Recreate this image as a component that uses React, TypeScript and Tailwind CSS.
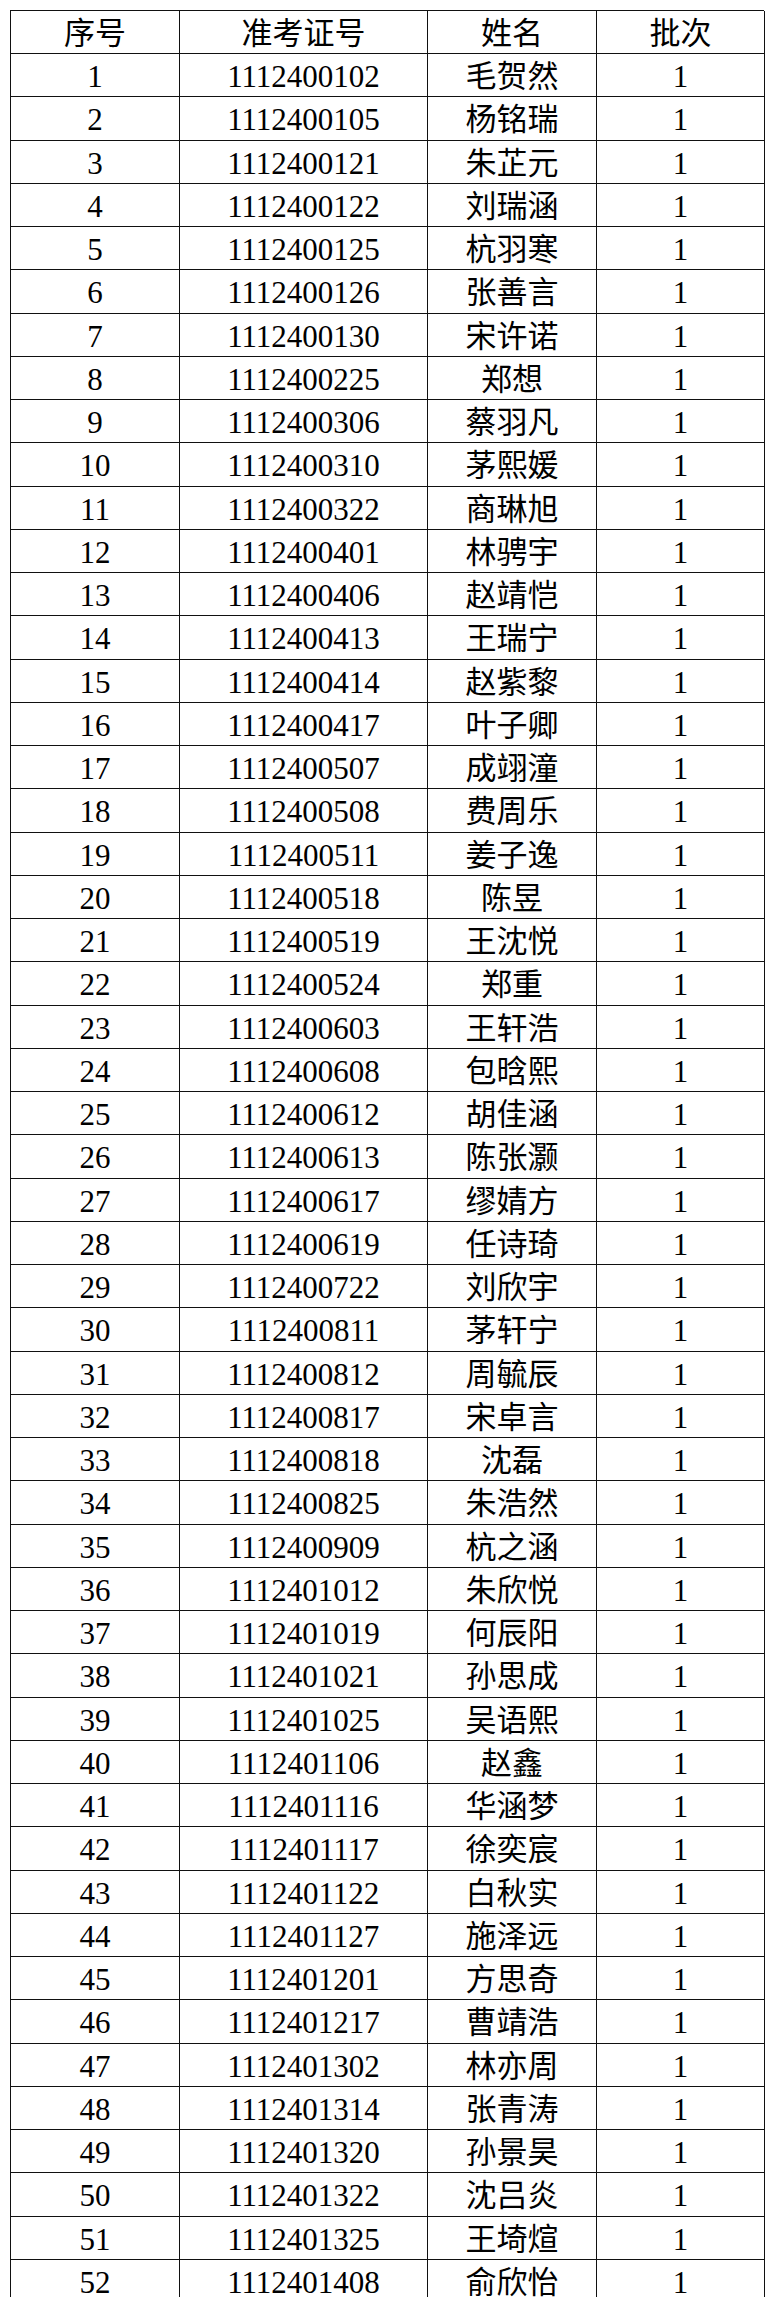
/* --------------------------- Row data of the list --------------------------- */
type Row = {
    no: number;
    ticket: string;
    name: string;
    batch: number;
};

const names: string[] = [
    "毛贺然", "杨铭瑞", "朱芷元", "刘瑞涵", "杭羽寒", "张善言", "宋许诺", "郑想",
    "蔡羽凡", "茅熙媛", "商琳旭", "林骋宇", "赵靖恺", "王瑞宁", "赵紫黎", "叶子卿",
    "成翊潼", "费周乐", "姜子逸", "陈昱", "王沈悦", "郑重", "王轩浩", "包晗熙",
    "胡佳涵", "陈张灏", "缪婧方", "任诗琦", "刘欣宇", "茅轩宁", "周毓辰", "宋卓言",
    "沈磊", "朱浩然", "杭之涵", "朱欣悦", "何辰阳", "孙思成", "吴语熙", "赵鑫",
    "华涵梦", "徐奕宸", "白秋实", "施泽远", "方思奇", "曹靖浩", "林亦周", "张青涛",
    "孙景昊", "沈吕炎", "王埼煊", "俞欣怡",
];

const tickets: string[] = [
    "0102", "0105", "0121", "0122", "0125", "0126", "0130", "0225",
    "0306", "0310", "0322", "0401", "0406", "0413", "0414", "0417",
    "0507", "0508", "0511", "0518", "0519", "0524", "0603", "0608",
    "0612", "0613", "0617", "0619", "0722", "0811", "0812", "0817",
    "0818", "0825", "0909", "1012", "1019", "1021", "1025", "1106",
    "1116", "1117", "1122", "1127", "1201", "1217", "1302", "1314",
    "1320", "1322", "1325", "1408",
];

const rows: Row[] = names.map((name, i) => ({
    no: i + 1,
    ticket: "111240" + tickets[i],
    name,
    batch: 1,
}));

const cell =
    "flex items-center justify-center border-r border-b border-[#111] pt-[3px]";

function App() {
    /* --------------------------------- RENDER --------------------------------- */
    return (
        <div className="h-[2297px] overflow-hidden bg-white pl-[10px] pt-[10px] font-['Liberation_Serif','Noto_Sans_CJK_SC',serif] text-[31px] leading-none text-black">
            <div className="grid w-[754px] grid-cols-[169px_248px_169px_168px] border-l border-t border-[#111]">
                {/* HEADER */}
                <div className={`${cell} h-[43px]`}>序号</div>
                <div className={`${cell} h-[43px]`}>准考证号</div>
                <div className={`${cell} h-[43px]`}>姓名</div>
                <div className={`${cell} h-[43px]`}>批次</div>

                {/* ROWS */}
                {rows.map((r) => (
                    <div key={r.no} className="contents">
                        <div className={`${cell} h-[43.25px]`}>{r.no}</div>
                        <div className={`${cell} h-[43.25px]`}>{r.ticket}</div>
                        <div className={`${cell} h-[43.25px]`}>{r.name}</div>
                        <div className={`${cell} h-[43.25px]`}>{r.batch}</div>
                    </div>
                ))}
            </div>
        </div>
    );
}

export default App;
